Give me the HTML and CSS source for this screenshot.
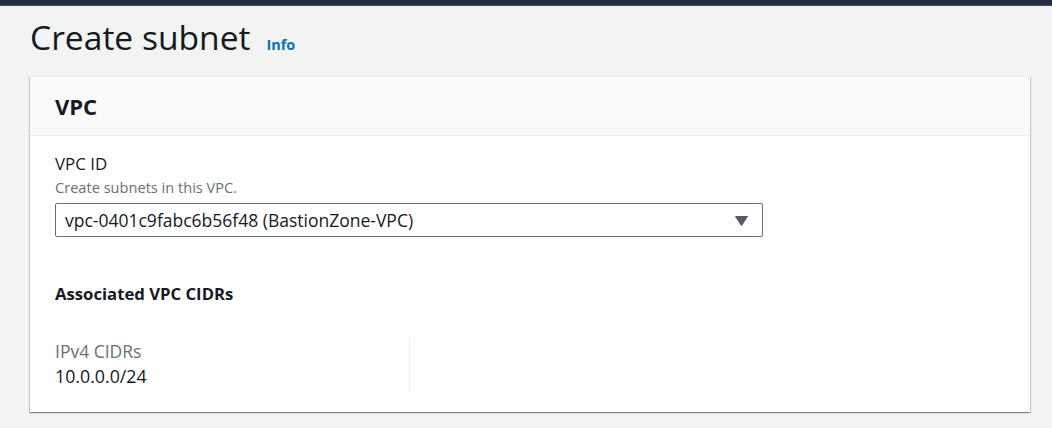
FILE: index.html
```html
<!DOCTYPE html>
<html>
<head>
<meta charset="utf-8">
<link rel="stylesheet" href="styles.css">
</head>
<body>
<div class="topbar"></div>
<main class="page">
  <div class="page-head">
    <h1 class="title">Create subnet</h1>
    <a class="info" href="#">Info</a>
  </div>
  <section class="card">
    <header class="card-head"><h2>VPC</h2></header>
    <div class="card-body">
      <div class="field">
        <div class="label">VPC ID</div>
        <div class="desc">Create subnets in this VPC.</div>
        <div class="select">
          <span class="select-text">vpc-0401c9fabc6b56f48 (BastionZone-VPC)</span>
          <svg class="caret" width="13" height="10" viewBox="0 0 13 10"><path d="M0.5 0.5 H12.5 L6.5 9.5 Z" fill="#545b64" stroke="#545b64" stroke-width="1" stroke-linejoin="round"/></svg>
        </div>
      </div>
      <h3 class="sub">Associated VPC CIDRs</h3>
      <div class="cols">
        <div class="col">
          <div class="kv-key">IPv4 CIDRs</div>
          <div class="kv-val">10.0.0.0/24</div>
        </div>
        <div class="col col-div"></div>
      </div>
    </div>
  </section>
</main>
</body>
</html>
```
FILE: styles.css
```css
* { box-sizing: border-box; }
html, body { margin: 0; padding: 0; }
body {
  background: #f2f3f3;
  font-family: "Open Sans", "Noto Sans", sans-serif;
  color: #16191f;
  width: 1052px;
  height: 428px;
  overflow: hidden;
}
.topbar {
  height: 6px;
  background: #232f3e;
  border-bottom: 1px solid #414b58;
}
.page {
  padding: 0 22px 0 30px;
}
.page-head {
  display: flex;
  align-items: baseline;
  height: 70px;
  padding-top: 11px;
}
.title {
  margin: 0;
  font-size: 33.6px;
  font-weight: 400;
  line-height: 40px;
  letter-spacing: 0;
}
.info {
  margin-left: 16px;
  font-size: 14.4px;
  font-weight: 700;
  color: #0073bb;
  text-decoration: none;
}
.card {
  background: #fff;
  border-top: 1px solid #eaeded;
  box-shadow: 0 1px 1px 0 rgba(0,28,36,.3), 1px 1px 1px 0 rgba(0,28,36,.15), -1px 1px 1px 0 rgba(0,28,36,.15);
}
.card-head {
  background: #fafafa;
  border-bottom: 1px solid #eaeded;
  height: 59px;
  padding: 0 25px;
  display: flex;
  align-items: center;
}
.card-head h2 {
  margin: 0;
  font-size: 22px;
  font-weight: 700;
  line-height: 26px;
}
.card-body {
  padding: 16px 25px 20px;
}
.label {
  font-size: 16.9px;
  line-height: 24px;
}
.desc {
  font-size: 14.6px;
  line-height: 22px;
  color: #687078;
  margin-bottom: 5px;
}
.select {
  width: 708px;
  height: 34px;
  border: 1px solid #687078;
  border-radius: 2px;
  display: flex;
  align-items: center;
  justify-content: space-between;
  padding: 0 14px 0 9px;
}
.select-text {
  font-size: 17.5px;
}
.caret { margin-top: 1px; }
.sub {
  margin: 45px 0 0;
  font-size: 16.7px;
  font-weight: 700;
  line-height: 24px;
}
.cols {
  display: flex;
  margin-top: 31px;
}
.col {
  width: 354px;
  min-height: 55px;
}
.col-div {
  border-left: 1px solid #eaeded;
}
.kv-key {
  font-size: 17.5px;
  line-height: 24px;
  color: #687078;
  margin-top: 2px;
}
.kv-val {
  font-size: 17.8px;
  line-height: 26px;
}
```
